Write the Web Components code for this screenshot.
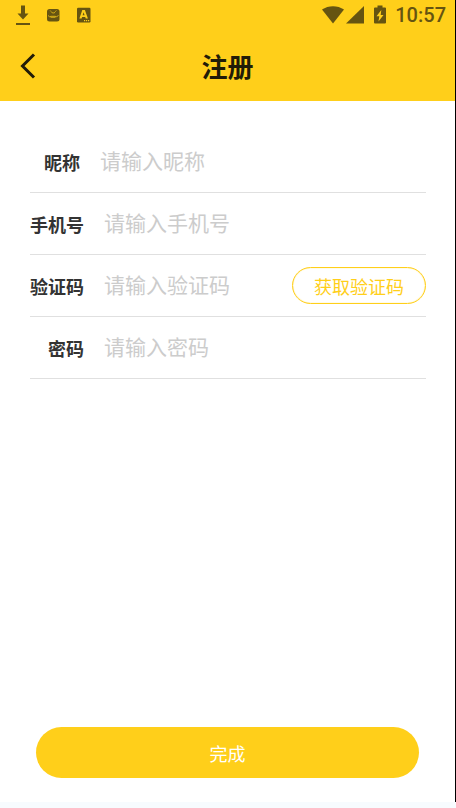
<!DOCTYPE html>
<html lang="zh-CN">
<head>
<meta charset="utf-8">
<meta name="viewport" content="width=device-width, initial-scale=1">
<title>注册</title>
<style>
html, body { margin: 0; }
body {
  --brand: #ffcf1a;
  --line: #e0e0e0;
  font-family: "Noto Sans CJK SC", sans-serif;
  color: #333;
  background: #f7fbfe;
}
</style>
</head>
<body>
<register-screen>
  <status-bar slot="top" time="10:57"></status-bar>
  <title-bar slot="top">注册</title-bar>
  <form-field name="nickname" label="昵称" hint="请输入昵称" short></form-field>
  <form-field name="phone" label="手机号" hint="请输入手机号" type="tel"></form-field>
  <form-field name="code" label="验证码" hint="请输入验证码"><outline-button>获取验证码</outline-button></form-field>
  <form-field name="password" label="密码" hint="请输入密码" type="password"></form-field>
  <submit-button slot="bottom">完成</submit-button>
</register-screen>

<script>
function define(name, html, setup) {
  const template = document.createElement('template');
  template.innerHTML = html;
  customElements.define(name, class extends HTMLElement {
    constructor() {
      super();
      this.attachShadow({ mode: 'open' }).append(template.content.cloneNode(true));
    }
    connectedCallback() {
      if (setup) setup(this, this.shadowRoot);
    }
  });
}

define('register-screen', `
<style>
:host { display: flex; flex-direction: column; min-height: 100vh; box-sizing: border-box; padding-bottom: 6px; }
.screen { flex: 1; display: flex; flex-direction: column; background: #fff; border-right: 1px solid #000; }
header { background: var(--brand); }
main { flex: 1; padding: 30px 29px 30px 30px; }
footer { padding: 0 36px 24px; }
</style>
<div class="screen">
  <header><slot name="top"></slot></header>
  <main><slot></slot></main>
  <footer><slot name="bottom"></slot></footer>
</div>`);

define('status-bar', `
<style>
:host { display: flex; justify-content: space-between; align-items: center; height: 30px; padding: 0 9px 1px 15px; color: #665411; }
.group { display: flex; align-items: center; }
.notices { gap: 14px; }
svg { display: block; fill: currentColor; }
time { font: 500 20px/24px Roboto, sans-serif; margin-left: 8px; }
.battery { margin-left: 9px; }
.signal { margin-left: 2px; }
</style>
<div class="group notices">
  <svg width="16" height="20" viewBox="0 0 16 20"><path d="M6 .5h4v8h3.500L8 14.500 2.500 8.500H6zM1 18h14v2H1z"/></svg>
  <svg width="16" height="20" viewBox="0 0 16 20"><rect x="2" y="4" width="12.500" height="12.500" rx="2.500"/><path d="M5.200 5.500l1 1.200M11.300 5.500l-1 1.200M6.500 7.500q1.700 1 3.500 0M3 10.500q1.500 2 3 .8h4q1.500 1.200 3.500-.8M5.500 12.300h5" fill="none" stroke="#ffcf1a" stroke-width=".9" opacity=".8"/></svg>
  <svg width="16" height="20" viewBox="0 0 16 20"><rect x="2" y="2.800" width="13.500" height="14.700" rx="1.200"/><path fill="#ffcf1a" fill-rule="evenodd" d="M7.300 5h2.600l3 8.500h-2.200l-.5-1.600H7.100l-.5 1.600H4.400zM8.600 7.200l-1 3.100h2zM9 15h1.200v1.200H9zM11 15h1.200v1.200H11zM13 15h1.200v1.200H13z"/></svg>
</div>
<div class="group">
  <svg width="22" height="20" viewBox="0 0 22 20"><path d="M0 4.500C6.500 0 15.500 0 22 4.500L11 18.500z"/></svg>
  <svg class="signal" width="18" height="20" viewBox="0 0 18 20"><path d="M18 1v17.500H0z"/></svg>
  <svg class="battery" width="14" height="20" viewBox="0 0 14 20"><path d="M4.500.5h5v2H12q1 0 1 1v14q0 1-1 1H2q-1 0-1-1v-14q0-1 1-1h2.500z"/><path fill="#ffcf1a" d="M8.300 5L3.500 11.200h2.800L5.500 16.500l5-6.500H7.700z"/></svg>
  <time></time>
</div>`, (el, root) => {
  root.querySelector('time').textContent = el.getAttribute('time');
});

define('title-bar', `
<style>
:host { display: grid; grid-template-columns: 56px 1fr 56px; align-items: center; height: 70px; color: #221c08; }
button { justify-self: start; margin: 0 0 0 16px; padding: 0; border: 0; background: none; color: inherit; }
svg { display: block; fill: none; stroke: currentColor; stroke-width: 3; }
h1 { margin: 0; font-size: 26px; line-height: 40px; font-weight: 700; text-align: center; }
</style>
<button type="button" aria-label="返回"><svg width="24" height="26" viewBox="0 0 24 26"><path d="M18 1.500L6.500 13 18 24.500"/></svg></button>
<h1><slot></slot></h1>`);

define('form-field', `
<style>
:host { display: flex; align-items: center; height: 61px; border-bottom: 1px solid var(--line); }
label { flex: none; width: 54px; font-size: 18px; line-height: 28px; font-weight: 700; text-align: right; }
:host([short]) label { width: 50px; }
input { flex: 1; min-width: 0; height: 40px; box-sizing: border-box; margin: 0 0 0 20px; padding: 0 0 4px; border: 0; outline: 0; background: none; font: inherit; font-size: 21px; color: inherit; }
input::placeholder { color: #ccc; opacity: 1; }
</style>
<label for="field"></label>
<input id="field">
<slot></slot>`, (el, root) => {
  const input = root.querySelector('input');
  root.querySelector('label').textContent = el.getAttribute('label');
  input.name = el.getAttribute('name');
  input.placeholder = el.getAttribute('hint');
  input.type = el.getAttribute('type') || 'text';
});

define('outline-button', `
<style>
:host { display: block; flex: none; }
button { display: block; height: 37px; margin: 0; padding: 0 21px; border: 1px solid var(--brand); border-radius: 19px; background: none; box-shadow: inset 0 0 1px var(--brand); color: var(--brand); font: inherit; font-size: 18px; line-height: 28px; }
</style>
<button type="button"><slot></slot></button>`);

define('submit-button', `
<style>
:host { display: block; }
button { display: block; width: 100%; height: 51px; margin: 0; padding: 0; border: 0; border-radius: 26px; background: var(--brand); color: #fff; font: inherit; font-size: 18px; line-height: 28px; }
</style>
<button type="submit"><slot></slot></button>`);
</script>
</body>
</html>
